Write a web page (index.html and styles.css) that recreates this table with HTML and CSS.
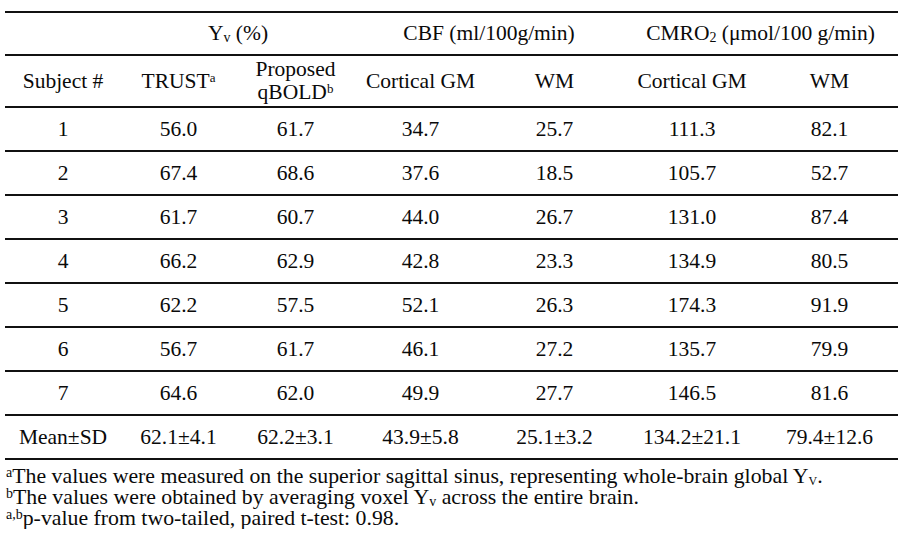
FILE: index.html
```html
<!DOCTYPE html>
<html>
<head>
<meta charset="utf-8">
<link rel="stylesheet" href="styles.css">
</head>
<body>
<div class="page">
<table class="data">
  <colgroup>
    <col class="c1"><col class="c2"><col class="c3"><col class="c4"><col class="c5"><col class="c6"><col class="c7">
  </colgroup>
  <thead>
    <tr class="h1">
      <th></th>
      <th colspan="2">Y<sub>v</sub> (%)</th>
      <th colspan="2">CBF (ml/100g/min)</th>
      <th colspan="2">CMRO<sub>2</sub> (μmol/100 g/min)</th>
    </tr>
    <tr class="h2">
      <th>Subject #</th>
      <th>TRUST<sup>a</sup></th>
      <th class="two">Proposed<br>qBOLD<sup>b</sup></th>
      <th>Cortical GM</th>
      <th>WM</th>
      <th>Cortical GM</th>
      <th>WM</th>
    </tr>
  </thead>
  <tbody>
    <tr><td>1</td><td>56.0</td><td>61.7</td><td>34.7</td><td>25.7</td><td>111.3</td><td>82.1</td></tr>
    <tr><td>2</td><td>67.4</td><td>68.6</td><td>37.6</td><td>18.5</td><td>105.7</td><td>52.7</td></tr>
    <tr><td>3</td><td>61.7</td><td>60.7</td><td>44.0</td><td>26.7</td><td>131.0</td><td>87.4</td></tr>
    <tr><td>4</td><td>66.2</td><td>62.9</td><td>42.8</td><td>23.3</td><td>134.9</td><td>80.5</td></tr>
    <tr><td>5</td><td>62.2</td><td>57.5</td><td>52.1</td><td>26.3</td><td>174.3</td><td>91.9</td></tr>
    <tr><td>6</td><td>56.7</td><td>61.7</td><td>46.1</td><td>27.2</td><td>135.7</td><td>79.9</td></tr>
    <tr><td>7</td><td>64.6</td><td>62.0</td><td>49.9</td><td>27.7</td><td>146.5</td><td>81.6</td></tr>
    <tr class="mean"><td>Mean±SD</td><td>62.1±4.1</td><td>62.2±3.1</td><td>43.9±5.8</td><td>25.1±3.2</td><td>134.2±21.1</td><td>79.4±12.6</td></tr>
  </tbody>
</table>
<div class="notes">
  <p><sup>a</sup>The values were measured on the superior sagittal sinus, representing whole-brain global Y<sub class="sc">V</sub>.</p>
  <p><sup>b</sup>The values were obtained by averaging voxel Y<sub>v</sub> across the entire brain.</p>
  <p><sup>a,b</sup>p-value from two-tailed, paired t-test: 0.98.</p>
</div>
</div>
</body>
</html>
```

FILE: styles.css
```css
html, body {
  margin: 0;
  padding: 0;
  background: #fff;
}
body {
  font-family: "Liberation Serif", Tinos, "DejaVu Serif", serif;
  color: #0a0a0a;
  font-size: 21.5px;
}
.page {
  padding: 11px 4px 0 5px;
}
.data {
  border-collapse: collapse;
  table-layout: fixed;
  width: 893px;
}
.c1 { width: 116px; }
.c2 { width: 115px; }
.c3 { width: 119px; }
.c4 { width: 131px; }
.c5 { width: 137px; }
.c6 { width: 138px; }
.c7 { width: 137px; }
.data th, .data td {
  font-weight: normal;
  text-align: center;
  vertical-align: middle;
  padding: 0;
  border-top: 2px solid #111;
  border-bottom: 2px solid #111;
  line-height: 23px;
}
.h1 th { height: 41px; }
.h2 th { height: 50px; }
.data tbody td { height: 42px; }
.data sup {
  font-size: 13px;
  vertical-align: 6px;
  line-height: 0;
}
.data sub {
  font-size: 14px;
  vertical-align: -2px;
  line-height: 0;
}
.notes {
  margin-top: 6px;
  padding-left: 1px;
}
.notes p {
  margin: 0;
  line-height: 21px;
  font-size: 21.8px;
}
.notes sup {
  font-size: 14px;
  vertical-align: 6px;
  line-height: 0;
}
.notes sub {
  font-size: 14px;
  vertical-align: -2px;
  line-height: 0;
}
.notes .sc {
  font-size: 12px;
}
```
